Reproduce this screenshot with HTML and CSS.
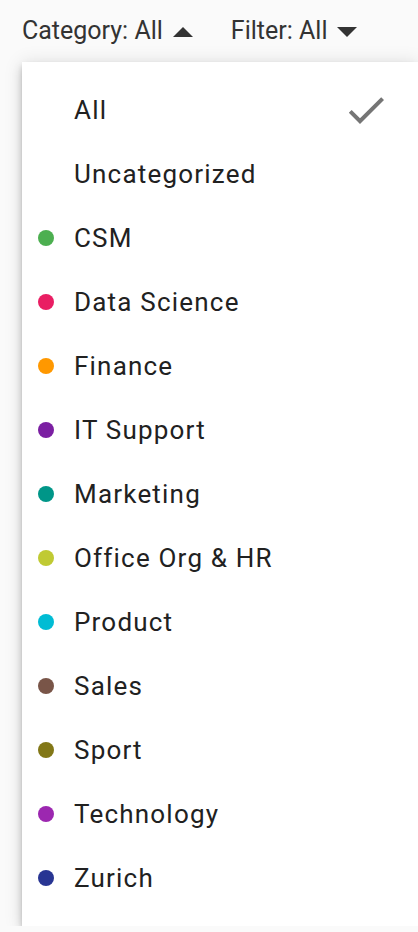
FILE: index.html
```html
<!DOCTYPE html>
<html>
<head>
<meta charset="utf-8">
<link rel="stylesheet" href="styles.css">
</head>
<body>
<div class="toolbar">
  <div class="sel">Category: All <svg class="tri" width="20" height="10" viewBox="0 0 20 10"><path d="M0 10L10 0L20 10Z"/></svg></div>
  <div class="sel">Filter: All <svg class="tri" width="20" height="10" viewBox="0 0 20 10"><path d="M0 0L10 10L20 0Z"/></svg></div>
</div>
<div class="menu">
  <div class="item"><span class="dot none"></span><span class="label">All</span>
    <svg class="check" width="48" height="48" viewBox="0 0 24 24"><path d="M9 16.17L4.83 12l-1.42 1.41L9 19 21 7l-1.41-1.41z"/></svg></div>
  <div class="item"><span class="dot none"></span><span class="label">Uncategorized</span></div>
  <div class="item"><span class="dot c-csm"></span><span class="label">CSM</span></div>
  <div class="item"><span class="dot c-ds"></span><span class="label">Data Science</span></div>
  <div class="item"><span class="dot c-fin"></span><span class="label">Finance</span></div>
  <div class="item"><span class="dot c-it"></span><span class="label">IT Support</span></div>
  <div class="item"><span class="dot c-mkt"></span><span class="label">Marketing</span></div>
  <div class="item"><span class="dot c-org"></span><span class="label">Office Org &amp; HR</span></div>
  <div class="item"><span class="dot c-prod"></span><span class="label">Product</span></div>
  <div class="item"><span class="dot c-sales"></span><span class="label">Sales</span></div>
  <div class="item"><span class="dot c-sport"></span><span class="label">Sport</span></div>
  <div class="item"><span class="dot c-tech"></span><span class="label">Technology</span></div>
  <div class="item"><span class="dot c-zur"></span><span class="label">Zurich</span></div>
</div>
</body>
</html>
```
FILE: styles.css
```css
html, body {
  margin: 0;
  padding: 0;
  background: #fafafa;
  font-family: Roboto, "Liberation Sans", sans-serif;
  overflow: hidden;
}
.toolbar {
  display: flex;
  align-items: center;
  height: 54px;
  padding: 4px 0 0 22px;
  gap: 38px;
}
.sel {
  display: flex;
  align-items: center;
  gap: 10px;
  font-size: 25px;
  line-height: 30px;
  color: #333;
}
.tri {
  fill: #333;
  margin-top: 2px;
}
.menu {
  margin: 4px 0 0 22px;
  background: #fff;
  padding: 16px 0;
  box-shadow: 0 3px 5px -1px rgba(0,0,0,0.2), 0 6px 10px 0 rgba(0,0,0,0.14), 0 1px 18px 0 rgba(0,0,0,0.12);
}
.item {
  display: flex;
  align-items: center;
  height: 64px;
  padding-left: 16px;
  font-size: 26px;
  letter-spacing: 1.2px;
  color: #212121;
}
.dot {
  width: 16px;
  height: 16px;
  border-radius: 50%;
  flex: none;
  margin-right: 20px;
}
.label { flex: 1; }
.check {
  fill: #757575;
  margin-right: 28px;
}
.c-csm { background: #4caf50; }
.c-ds { background: #e91e63; }
.c-fin { background: #ff9800; }
.c-it { background: #7b1fa2; }
.c-mkt { background: #009688; }
.c-org { background: #c0ca33; }
.c-prod { background: #00bcd4; }
.c-sales { background: #795548; }
.c-sport { background: #827717; }
.c-tech { background: #9c27b0; }
.c-zur { background: #283593; }
```
